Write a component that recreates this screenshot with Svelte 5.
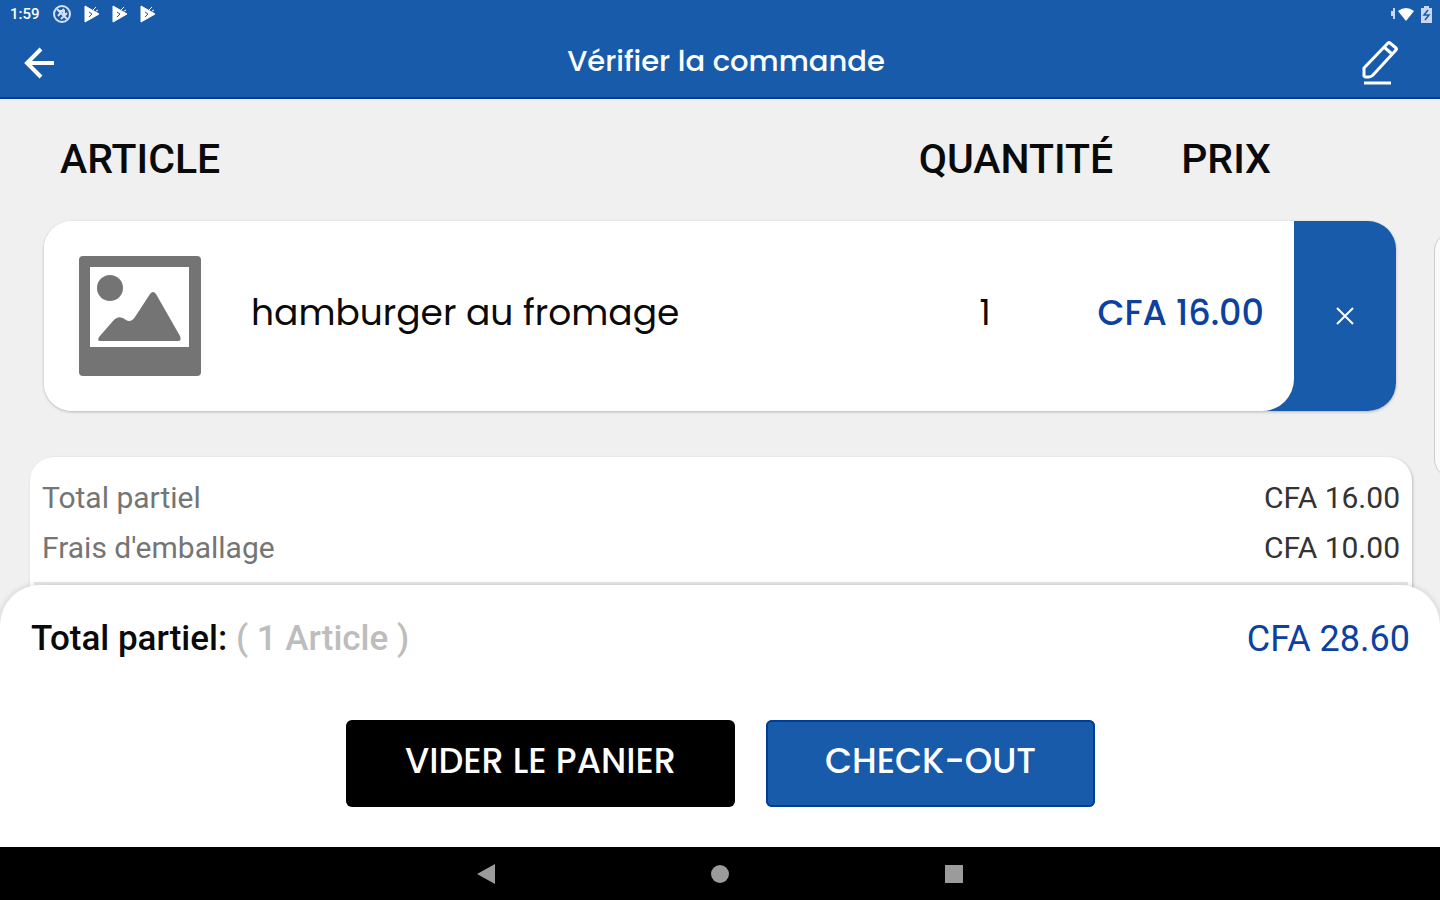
<script lang="ts">
	type Item = { id: number; name: string; quantity: number; price: number };

	let items = $state<Item[]>([
		{ id: 1, name: "hamburger au fromage", quantity: 1, price: 16 }
	]);

	const fees = [
		{ label: "Total partiel", amount: 16 },
		{ label: "Frais d'emballage", amount: 10 }
	];
	const taxes = 2.6;

	let count = $derived(items.reduce((sum, item) => sum + item.quantity, 0));
	let total = $derived(count ? fees.reduce((sum, fee) => sum + fee.amount, taxes) : 0);

	function money(value: number) {
		return `CFA ${value.toFixed(2)}`;
	}

	function removeItem(id: number) {
		items = items.filter((item) => item.id !== id);
	}
</script>

<div class="screen">
	<header>
		<div class="status-bar">
			<div class="status-group">
				<span class="clock">1:59</span>
				<svg class="status-ring" viewBox="0 0 20 20" width="20" height="20">
					<circle cx="10" cy="10" r="8" />
					<path d="M5 5 15 15M6 12 12 5M9 15 15 9M7 7h5v5" />
				</svg>
				{#each [1, 2, 3] as n (n)}
					<svg class="status-play" viewBox="0 0 16 18" width="16" height="18">
						<path d="M1 1 15 9 1 17Z" />
						<path d="M9 5 12 2M12 6 14 5" />
						<path class="cut" d="M5 7 8 9 5 12" />
					</svg>
				{/each}
			</div>
			<svg class="status-icons" viewBox="0 0 44 18" width="44" height="18">
				<path d="M4 3v11M2 6v5" stroke="#c9d8f0" stroke-width="2" />
				<path d="M8 6Q16 0 24 6L16 16Z" fill="#fff" />
				<path d="M31 3h3V1h5v2h3v15H31Z" fill="#c9d8f0" />
				<path d="M38 5 34 10h5l-4 5" stroke="#195bab" stroke-width="1.5" fill="none" />
			</svg>
		</div>
		<div class="toolbar">
			<button type="button" class="icon-btn" aria-label="Retour">
				<svg viewBox="0 0 32 32" width="32" height="32">
					<path d="M30 16H3M17 2 3 16 17 30" />
				</svg>
			</button>
			<h1>Vérifier la commande</h1>
			<button type="button" class="icon-btn" aria-label="Modifier">
				<svg class="pencil" viewBox="0 0 38 48" width="38" height="48">
					<path d="M2 37V29L26 4Q27 3 28 4L34 9Q35 10 34 11L11 36Q9 38 7 38H3Z" />
					<path d="M22 8 30 15" />
					<path d="M2 44H29" />
				</svg>
			</button>
		</div>
	</header>

	<main>
		<div class="order">
			<table>
				<thead>
					<tr>
						<th>ARTICLE</th>
						<th>QUANTITÉ</th>
						<th>PRIX</th>
					</tr>
				</thead>
				<tbody>
					{#each items as item (item.id)}
						<tr>
							<td class="picture">
								<svg viewBox="0 0 122 120" width="122" height="120">
									<rect width="122" height="120" rx="4" />
									<rect class="photo" x="11" y="11" width="99" height="80" />
									<circle cx="31" cy="32" r="13" />
									<path d="M21 85Q18 85 20 81L34 65Q40 58 47 64Q52 67 56 61L71 38Q74 34 77 38L101 80Q103 85 99 85Z" />
								</svg>
							</td>
							<td class="name">{item.name}</td>
							<td class="quantity">{item.quantity}</td>
							<td class="price">{money(item.price)}</td>
							<td class="remove">
								<button type="button" aria-label="Supprimer" onclick={() => removeItem(item.id)}>
									<svg viewBox="0 0 18 18" width="18" height="18">
										<path d="M1 1 17 17M17 1 1 17" />
									</svg>
								</button>
							</td>
						</tr>
					{/each}
				</tbody>
			</table>

			<div class="summary">
				<dl>
					{#each fees as fee (fee.label)}
						<div class="fee">
							<dt>{fee.label}</dt>
							<dd>{money(fee.amount)}</dd>
						</div>
					{/each}
				</dl>
				<hr />
			</div>
		</div>
		<aside class="next-panel"></aside>
	</main>

	<section class="sheet">
		<div class="total">
			<p>Total partiel: <span>( {count} Article )</span></p>
			<strong>{money(total)}</strong>
		</div>
		<div class="actions">
			<button type="button" class="clear-btn" onclick={() => (items = [])}>VIDER LE PANIER</button>
			<button type="button" class="checkout-btn">CHECK-OUT</button>
		</div>
	</section>

	<nav>
		<button type="button" aria-label="Précédent">
			<svg viewBox="0 0 20 20" width="20" height="20"><path d="M19 0V20L1 10Z" /></svg>
		</button>
		<button type="button" aria-label="Accueil">
			<svg viewBox="0 0 20 20" width="20" height="20"><circle cx="10" cy="10" r="9" /></svg>
		</button>
		<button type="button" aria-label="Applications">
			<svg viewBox="0 0 20 20" width="20" height="20"><rect x="1" y="1" width="18" height="18" /></svg>
		</button>
	</nav>
</div>

<style>
	:global(body) {
		margin: 0;
	}

	.screen {
		--blue: #195bab;
		--blue-dark: #003c9c;
		--blue-text: #0c419f;
		--font-brand: Poppins, Inter, sans-serif;
		display: flex;
		flex-direction: column;
		min-height: 100vh;
		background: #f0f0f0;
		color: #0a0a0a;
		font-family: Roboto, sans-serif;
	}

	button {
		margin: 0;
		padding: 0;
		border: none;
		background: none;
		font: inherit;
		color: inherit;
		cursor: pointer;
	}

	svg {
		display: block;
	}

	header {
		background: var(--blue);
		border-bottom: 2px solid var(--blue-dark);
		color: #fff;
	}

	.status-bar {
		display: flex;
		justify-content: space-between;
		align-items: center;
		height: 28px;
		padding: 0 6px 0 10px;
	}

	.status-group {
		display: flex;
		align-items: center;
		gap: 12px;
	}

	.clock {
		font-size: 15px;
		font-weight: 500;
	}

	.status-ring {
		fill: none;
		stroke: #d5e0f3;
		stroke-width: 2;
	}

	.status-play {
		fill: #fff;
		stroke: #fff;
	}

	.status-play .cut {
		fill: none;
		stroke: var(--blue);
	}

	.toolbar {
		display: grid;
		grid-template-columns: 66px 1fr 36px;
		align-items: center;
		height: 69px;
		padding: 0 42px 0 24px;
	}

	.icon-btn svg {
		fill: none;
		stroke: #fff;
		stroke-width: 4;
	}

	.icon-btn .pencil {
		stroke-width: 3;
		stroke-linejoin: round;
	}

	h1 {
		margin: 0;
		padding-bottom: 4px;
		font-family: var(--font-brand);
		font-size: 29px;
		font-weight: 500;
		line-height: 36px;
		text-align: center;
	}

	main {
		display: flex;
		flex: 1;
		overflow: hidden;
	}

	.order {
		display: flex;
		flex: 1;
		flex-direction: column;
		padding: 0 22px 0 30px;
	}

	table {
		display: block;
		margin: 0 16px 46px 14px;
	}

	thead,
	tbody {
		display: block;
	}

	thead tr {
		display: grid;
		grid-template-columns: 1fr auto auto;
		align-items: center;
		column-gap: 68px;
		height: 122px;
		padding: 0 125px 2px 16px;
		box-sizing: border-box;
	}

	th {
		padding: 0;
		font-size: 41px;
		font-weight: 500;
		text-align: left;
	}

	tbody tr {
		display: grid;
		grid-template-columns: 207px 1fr 118px 250px 102px;
		height: 190px;
		border-radius: 28px;
		overflow: hidden;
		background: linear-gradient(to right, #fff 50%, var(--blue) 50%);
		box-shadow: 0 1px 3px rgba(0, 0, 0, 0.25);
		font-family: var(--font-brand);
		font-size: 35px;
	}

	td {
		display: flex;
		align-items: center;
		padding: 0;
		background: #fff;
	}

	.picture {
		padding-left: 35px;
		fill: #747474;
	}

	.photo {
		fill: #fff;
	}

	.name,
	.quantity,
	.price {
		padding-bottom: 8px;
	}

	.name {
		font-size: 36px;
	}

	.quantity {
		justify-content: center;
	}

	.price {
		justify-content: flex-end;
		padding-right: 30px;
		border-bottom-right-radius: 32px;
		color: var(--blue-text);
		font-weight: 500;
	}

	.remove {
		background: none;
	}

	.remove button {
		display: grid;
		place-items: center;
		width: 100%;
		height: 100%;
	}

	.remove path {
		stroke: #fff;
		stroke-width: 2;
	}

	.summary {
		flex: 1;
		border-radius: 24px 24px 0 0;
		background: #fff;
		box-shadow: 1px 1px 3px rgba(0, 0, 0, 0.22);
		font-size: 30px;
	}

	dl {
		margin: 0;
		padding: 16px 12px 9px;
	}

	.fee {
		display: flex;
		justify-content: space-between;
		line-height: 50px;
	}

	dt {
		color: #757575;
	}

	dd {
		margin: 0;
		color: #333;
	}

	hr {
		height: 3px;
		margin: 0 4px;
		border: none;
		background: #e9e9e9;
	}

	/* only the left edge of the next panel peeks in */
	.next-panel {
		width: 40px;
		height: 248px;
		margin: 132px -34px 0 0;
		border: 1px solid #ccc;
		border-radius: 20px;
		background: #fafafa;
		box-sizing: border-box;
	}

	.sheet {
		position: relative;
		margin-top: -40px;
		padding: 29px 30px 40px 31px;
		border-radius: 40px 40px 0 0;
		background: #fff;
		box-shadow: 0 0 6px rgba(0, 0, 0, 0.16);
	}

	.total {
		display: flex;
		justify-content: space-between;
		font-size: 35px;
		font-weight: 500;
		line-height: 50px;
	}

	.total p {
		margin: 0;
	}

	.total span {
		color: #bdbdbd;
	}

	.total strong {
		color: var(--blue-text);
		font-size: 36px;
		font-weight: 400;
	}

	.actions {
		display: flex;
		justify-content: center;
		gap: 31px;
		margin-top: 56px;
	}

	.actions button {
		height: 87px;
		padding: 0 59px 6px;
		border-radius: 6px;
		color: #fff;
		font-family: var(--font-brand);
		font-size: 35px;
		font-weight: 500;
	}

	.actions .clear-btn {
		background: #000;
	}

	.actions .checkout-btn {
		background: var(--blue);
		box-shadow: inset 0 0 0 2px var(--blue-dark);
	}

	nav {
		display: flex;
		justify-content: center;
		gap: 214px;
		height: 53px;
		background: #000;
	}

	nav svg {
		fill: #9b9b9b;
	}
</style>
